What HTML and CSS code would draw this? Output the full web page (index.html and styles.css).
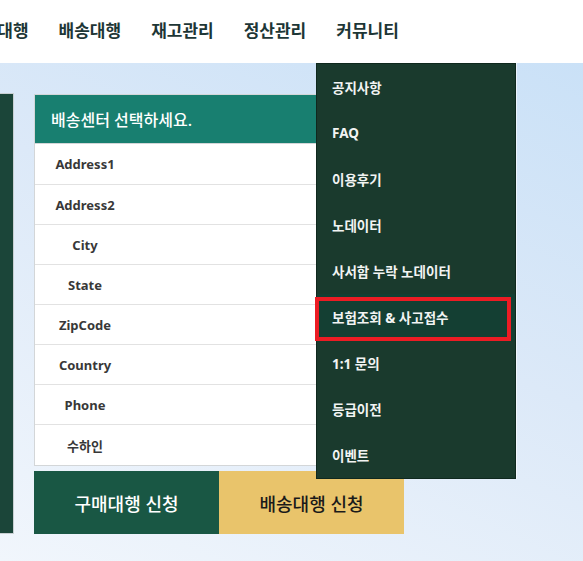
FILE: index.html
```html
<!DOCTYPE html>
<html lang="ko">
<head>
<meta charset="utf-8">
<link rel="stylesheet" href="styles.css">
</head>
<body>
<header class="top">
  <nav class="gnb">
    <span class="gnb-item">구매대행</span>
    <span class="gnb-item">배송대행</span>
    <span class="gnb-item">재고관리</span>
    <span class="gnb-item">정산관리</span>
    <span class="gnb-item">커뮤니티</span>
  </nav>
</header>
<main class="stage">
  <div class="side-panel"></div>
  <section class="center-col">
    <div class="card">
      <div class="card-head">배송센터 선택하세요.</div>
      <div class="row row-first"><span class="label">Address1</span></div>
      <div class="row"><span class="label">Address2</span></div>
      <div class="row"><span class="label">City</span></div>
      <div class="row"><span class="label">State</span></div>
      <div class="row"><span class="label">ZipCode</span></div>
      <div class="row"><span class="label">Country</span></div>
      <div class="row"><span class="label">Phone</span></div>
      <div class="row"><span class="label">수하인</span></div>
    </div>
    <div class="btns">
      <div class="btn btn-green">구매대행 신청</div>
      <div class="btn btn-yellow">배송대행 신청</div>
    </div>
  </section>
</main>
<ul class="dropdown">
  <li class="dd-item">공지사항</li>
  <li class="dd-item">FAQ</li>
  <li class="dd-item">이용후기</li>
  <li class="dd-item">노데이터</li>
  <li class="dd-item">사서함 누락 노데이터</li>
  <li class="dd-item dd-active">보험조회 &amp; 사고접수</li>
  <li class="dd-item">1:1 문의</li>
  <li class="dd-item">등급이전</li>
  <li class="dd-item">이벤트</li>
</ul>
<div class="highlight"></div>
</body>
</html>
```

FILE: styles.css
```css
* { box-sizing: border-box; }
html, body { margin: 0; padding: 0; }
body {
  width: 583px;
  height: 561px;
  overflow: hidden;
  position: relative;
  font-family: "Noto Sans", "Noto Sans CJK KR", sans-serif;
  background: #fff;
}
.top {
  height: 63px;
  background: #fff;
  display: flex;
  align-items: center;
}
.gnb {
  display: flex;
  gap: 30px;
  margin-left: -34px;
  margin-top: -2px;
}
.gnb-item {
  font-size: 17px;
  font-weight: 700;
  color: #1d3636;
  line-height: 20px;
  white-space: nowrap;
}
.stage {
  height: 498px;
  background: linear-gradient(205deg, #cae1f7 0%, #dce9f8 45%, #f1f6fc 100%);
  display: flex;
  align-items: flex-start;
  gap: 20px;
  padding-top: 30px;
}
.side-panel {
  width: 14px;
  height: 441px;
  background: #1b4539;
  border: 1px solid #c8cfd2;
  border-left: none;
}
.center-col {
  width: 370px;
  margin-top: 1px;
  display: flex;
  flex-direction: column;
  gap: 5px;
}
.card {
  background: #fff;
  border: 1px solid #d3d6d8;
}
.card-head {
  height: 49px;
  background: #187f70;
  color: #fff;
  font-size: 16px;
  font-weight: 500;
  display: flex;
  align-items: center;
  padding-left: 16px;
  border-bottom: 1px solid #d3d6d8;
}
.row {
  height: 40px;
  display: flex;
  align-items: center;
  border-bottom: 1px solid #e2e2e2;
}
.row-first { height: 41px; }
.row:last-child { border-bottom: none; }
.label {
  width: 100px;
  text-align: center;
  font-size: 13px;
  font-weight: 700;
  color: #383838;
}
.btns {
  display: flex;
}
.btn {
  width: 185px;
  height: 63px;
  display: flex;
  align-items: center;
  justify-content: center;
  font-size: 18px;
  font-weight: 500;
}
.btn-green {
  background: #195744;
  color: #fff;
}
.btn-yellow {
  background: #e9c46b;
  color: #1a1a1a;
}
.dropdown {
  position: absolute;
  left: 316px;
  top: 63px;
  width: 200px;
  margin: 0;
  padding: 0;
  list-style: none;
  background: #1a3a2d;
  border: 1px solid #0f281e;
  box-shadow: 1px 0 0 rgba(255,255,255,0.6);
}
.dd-item {
  height: 46px;
  display: flex;
  align-items: center;
  padding-left: 15px;
  font-size: 13.5px;
  font-weight: 700;
  color: #f2f4f3;
  white-space: nowrap;
}
.dd-active {
  background: #143f33;
}
.highlight {
  position: absolute;
  left: 315px;
  top: 297px;
  width: 196px;
  height: 44px;
  border: 4px solid #ec1c24;
}
```
